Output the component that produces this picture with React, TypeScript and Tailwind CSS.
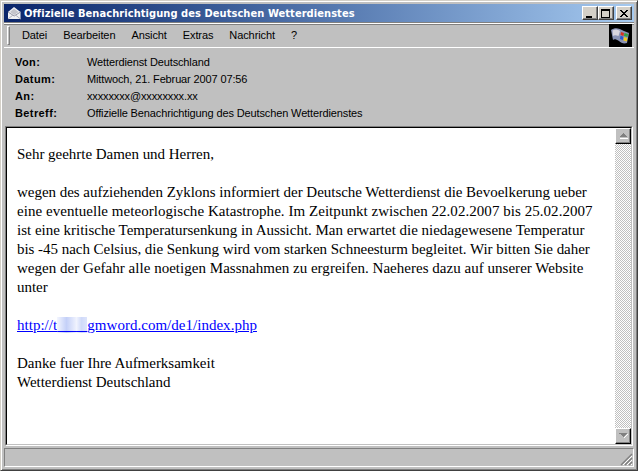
import React from "react";

const ui = { fontFamily: '"Liberation Sans", Arial, sans-serif' };

function Envelope() {
  return (
    <svg width="16" height="16" viewBox="0 0 16 16" className="shrink-0">
      <path d="M2 7 L8 2 L14.5 7 V14 H2 Z" fill="#f0f0f4" />
      <path d="M4 7 L8 3.5 L12.5 7 L8.2 10 Z" fill="#c4c4cc" />
      <path d="M2 7 L8.2 11 L14.5 7" fill="none" stroke="#9a9aa8" strokeWidth="1" />
      <path d="M2 14 L7 10 M14.5 14 L9.5 10" fill="none" stroke="#b0b0bc" strokeWidth="1" />
    </svg>
  );
}

function CapButton({ kind, className = "" }: { kind: "min" | "max" | "close"; className?: string }) {
  return (
    <div className={`w-4 h-[14px] bg-[#d4d0c8] border border-t-white border-l-white border-r-[#404040] border-b-[#404040] shadow-[inset_-1px_-1px_0_#808080] flex items-center justify-center ${className}`}>
      <svg width="10" height="9" viewBox="0 0 10 9" shapeRendering="crispEdges">
        {kind === "min" && <rect x="1" y="7" width="6" height="2" fill="#000" />}
        {kind === "max" && <path d="M0.5 1.5 H8.5 V8.5 H0.5 Z M0 0.5 H9" fill="none" stroke="#000" strokeWidth="1" />}
        {kind === "close" && <path d="M1 1 L8 8 M2 1 L9 8 M8 1 L1 8 M9 1 L2 8" stroke="#000" strokeWidth="1" fill="none" />}
      </svg>
    </div>
  );
}

function WinLogo() {
  return (
    <div className="w-[23px] h-[23px] bg-black flex items-center justify-center shrink-0">
      <svg width="21" height="21" viewBox="0 0 21 21">
        <path d="M1 5 C5 2 9 3 14 6 L19 8 L17 18 C14 19 11 18 9 16 C6 14 4 14 3 15 Z" fill="#8a92b4" />
        <path d="M2.5 5.5 C5 4 7 4 10 6 L8.5 11 C6 10 4 10 3 11 Z" fill="#d8d4dc" />
        <path d="M11 7 L14 8 L13.5 11 L10.5 10 Z" fill="#d83020" />
        <path d="M14.5 8 L18 9 L17.5 12 L14 11 Z" fill="#30a040" />
        <path d="M10.5 10.8 L13.4 11.8 L13 15 L10 14 Z" fill="#2858d0" />
        <path d="M13.9 12 L17.3 13 L16.8 16.5 L13.5 15.5 Z" fill="#f0c820" />
      </svg>
    </div>
  );
}

function Arrow({ up }: { up?: boolean }) {
  return (
    <svg width="9" height="6" viewBox="0 0 9 6" shapeRendering="crispEdges">
      {up ? (
        <>
          <path d="M4 0 H5 V1 H6 V2 H7 V3 H8 V4 H1 V3 H2 V2 H3 V1 H4 Z" fill="#808080" />
          <rect x="1" y="5" width="8" height="1" fill="#fff" />
        </>
      ) : (
        <>
          <path d="M0 0 H8 V1 H7 V2 H6 V3 H5 V4 H4 V3 H3 V2 H2 V1 H1 H0 Z" fill="#808080" />
          <path d="M8 1 H9 V2 H8 Z M7 2 H8 V3 H7 Z M6 3 H7 V4 H6 Z M5 4 H6 V5 H5 Z" fill="#fff" />
        </>
      )}
    </svg>
  );
}

function ScrollButton({ up }: { up?: boolean }) {
  return (
    <div className="w-4 h-4 shrink-0 bg-[#c0c0c0] border border-t-white border-l-white border-r-black border-b-black shadow-[inset_-1px_-1px_0_#808080] flex items-center justify-center">
      <Arrow up={up} />
    </div>
  );
}

const headers: [string, string][] = [
  ["Von:", "Wetterdienst Deutschland"],
  ["Datum:", "Mittwoch, 21. Februar 2007 07:56"],
  ["An:", "xxxxxxxx@xxxxxxxx.xx"],
  ["Betreff:", "Offizielle Benachrichtigung des Deutschen Wetterdienstes"],
];

export default function App() {
  return (
    <div className="w-[638px] h-[471px] bg-[#c0c0c0] flex flex-col overflow-hidden border border-t-[#d4d0c8] border-l-[#d4d0c8] border-r-[#404040] border-b-[#404040] shadow-[inset_1px_1px_0_#fff,inset_-1px_-1px_0_#808080] p-[3px]" style={ui}>
      {/* Title bar */}
      <div className="h-[18px] shrink-0 flex items-center pl-[2px] pr-[2px] bg-gradient-to-r from-[#0a246a] to-[#a6caf0]">
        <Envelope />
        <span className="ml-[2px] text-white font-bold text-[11px] tracking-[0.07px] leading-none whitespace-nowrap" style={{ fontFamily: '"DejaVu Sans Condensed", "DejaVu Sans", sans-serif', fontStretch: "condensed" }}>
          Offizielle Benachrichtigung des Deutschen Wetterdienstes
        </span>
        <div className="ml-auto flex items-center">
          <CapButton kind="min" />
          <CapButton kind="max" />
          <CapButton kind="close" className="ml-[2px]" />
        </div>
      </div>

      {/* Menu bar */}
      <div className="mt-[1px] h-[25px] shrink-0 flex items-center border-y border-t-white border-b-white shadow-[inset_0_1px_0_#808080,0_-1px_0_#808080] pl-[3px]">
        <div className="w-[3px] h-[19px] border border-t-white border-l-white border-r-[#808080] border-b-[#808080]" />
        <div className="ml-[12px] flex gap-[16px] text-[11px] tracking-[-0.1px] text-black whitespace-nowrap">
          <span>Datei</span>
          <span>Bearbeiten</span>
          <span>Ansicht</span>
          <span>Extras</span>
          <span>Nachricht</span>
          <span>?</span>
        </div>
        <div className="ml-auto mr-[2px]">
          <WinLogo />
        </div>
      </div>

      {/* Header fields */}
      <div className="mt-[6px] pl-[11px] flex flex-col text-[11px] text-black leading-[17px] shrink-0">
        {headers.map(([k, v]) => (
          <div key={k} className="flex h-[17px]">
            <span className="w-[72px] font-bold tracking-[0.4px]">{k}</span>
            <span className="whitespace-nowrap tracking-[-0.13px]">{v}</span>
          </div>
        ))}
      </div>

      {/* Body */}
      <div className="mt-[4px] mx-[1px] flex-1 min-h-0 flex border border-t-[#808080] border-l-[#808080] border-r-white border-b-white">
        <div className="flex-1 min-w-0 flex border border-t-black border-l-black border-r-[#c0c0c0] border-b-[#c0c0c0] bg-white">
          <div className="flex-1 min-w-0 pl-[10px] pt-[17px] text-[15px] tracking-[-0.03px] leading-[19px] text-black whitespace-nowrap" style={{ fontFamily: '"Liberation Serif", serif' }}>
            <p>Sehr geehrte Damen und Herren,</p>
            <p className="mt-[19px]">wegen des aufziehenden Zyklons informiert der Deutsche Wetterdienst die Bevoelkerung ueber</p>
            <p className="tracking-[0.045px]">eine eventuelle meteorlogische Katastrophe. Im Zeitpunkt zwischen 22.02.2007 bis 25.02.2007</p>
            <p className="tracking-[-0.01px]">ist eine kritische Temperatursenkung in Aussicht. Man erwartet die niedagewesene Temperatur</p>
            <p className="tracking-[-0.04px]">bis -45 nach Celsius, die Senkung wird vom starken Schneesturm begleitet. Wir bitten Sie daher</p>
            <p className="tracking-[0.025px]">wegen der Gefahr alle noetigen Massnahmen zu ergreifen. Naeheres dazu auf unserer Website</p>
            <p>unter</p>
            <p className="mt-[19px]">
              <a className="text-[#0000ff] underline tracking-[0.02px]">
                http://t
                <span className="bg-gradient-to-r from-[#f4f6fe] via-[#c4d0f8] to-[#eef1fd]">{"\u00a0\u00a0\u00a0\u00a0\u00a0"}</span>
                <span className="bg-gradient-to-r from-[#f4f6fe] via-[#d0daf9] to-[#dde4fc]">{"\u00a0\u00a0\u00a0"}</span>
                gmword.com/de1/index.php
              </a>
            </p>
            <p className="mt-[19px]">Danke fuer Ihre Aufmerksamkeit</p>
            <p>Wetterdienst Deutschland</p>
          </div>
          <div className="w-4 shrink-0 flex flex-col">
            <ScrollButton up />
            <div className="flex-1 bg-[repeating-conic-gradient(#c0c0c0_0_25%,#ffffff_0_50%)] bg-[length:2px_2px]" />
            <ScrollButton />
          </div>
        </div>
      </div>

      {/* Status bar */}
      <div className="mt-[2px] h-[19px] shrink-0 relative border border-t-[#808080] border-l-[#808080] border-r-white border-b-white">
        <svg className="absolute right-0 bottom-0" width="13" height="13" viewBox="0 0 13 13">
          <path d="M12 1 L1 12 M12 5 L5 12 M12 9 L9 12" stroke="#808080" strokeWidth="1.4" fill="none" />
          <path d="M12 3 L3 12 M12 7 L7 12 M12 11 L11 12" stroke="#fff" strokeWidth="1" fill="none" />
        </svg>
      </div>
    </div>
  );
}
